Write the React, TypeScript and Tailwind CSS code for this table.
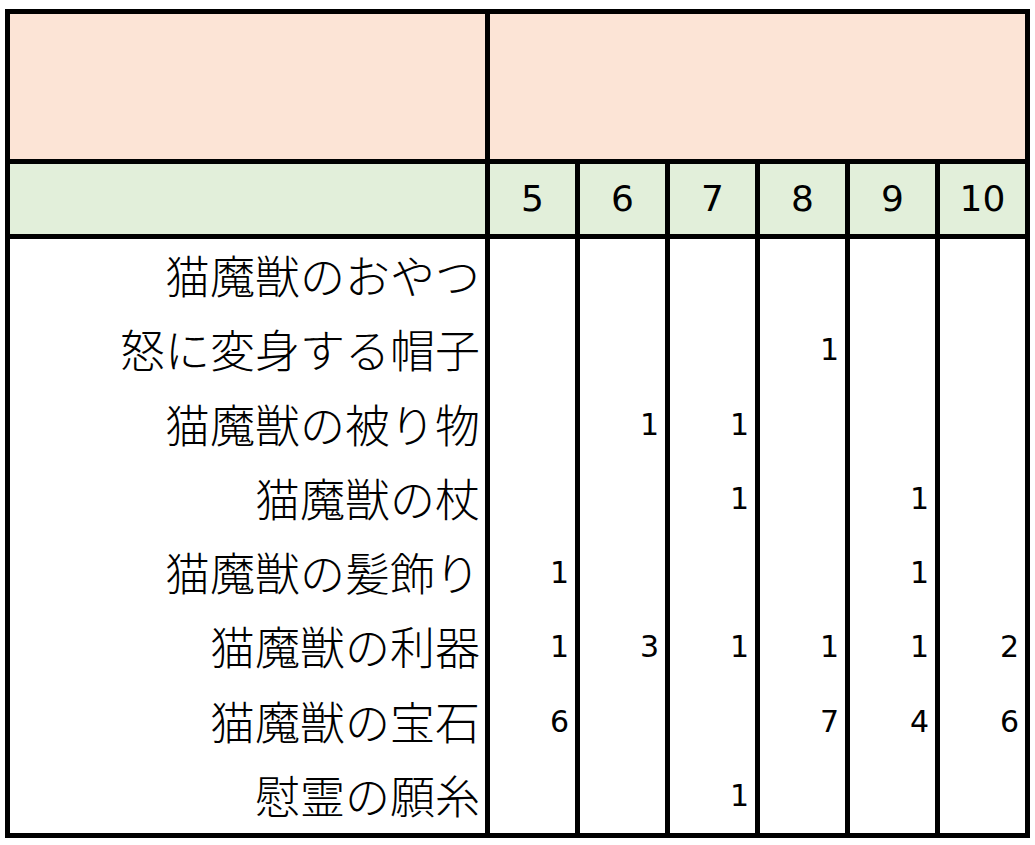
const labels = [
  "猫魔獣のおやつ",
  "怒に変身する帽子",
  "猫魔獣の被り物",
  "猫魔獣の杖",
  "猫魔獣の髪飾り",
  "猫魔獣の利器",
  "猫魔獣の宝石",
  "慰霊の願糸",
]

const headers = [5, 6, 7, 8, 9, 10]

// counts[col][row]
const counts: (number | null)[][] = [
  [null, null, null, null, 1, 1, 6, null],
  [null, null, 1, null, null, 3, null, null],
  [null, null, 1, 1, null, 1, null, 1],
  [null, 1, null, null, null, 1, 7, null],
  [null, null, null, 1, 1, 1, 4, null],
  [null, null, null, null, null, 2, 6, null],
]

const jp = "font-['Noto_Sans_CJK_JP','Noto_Sans',sans-serif]"
const num = "font-['DejaVu_Sans','Noto_Sans',sans-serif]"

export default function App() {
  return (
    <div className="min-h-[845px] bg-white pl-[5px] pt-[9px]">
      <div className="grid w-[1025px] grid-cols-[475px_repeat(6,85px)] grid-rows-[145px_70px_594px] gap-[5px] bg-black p-[5px]">
        <div className="bg-[#fce4d6]" />
        <div className="col-span-6 bg-[#fce4d6]" />

        <div className="bg-[#e2efda]" />
        {headers.map((h) => (
          <div
            key={h}
            className={`flex items-center justify-center bg-[#e2efda] text-[36px] text-black ${num}`}
          >
            {h}
          </div>
        ))}

        <div className={`grid grid-rows-8 bg-white text-[45px] font-light leading-none text-black ${jp}`}>
          {labels.map((l) => (
            <div key={l} className="flex items-center justify-end pb-[3px] pr-[5px]">
              {l}
            </div>
          ))}
        </div>
        {counts.map((col, i) => (
          <div key={i} className={`grid grid-rows-8 bg-white text-[30px] leading-none text-black ${num}`}>
            {col.map((v, j) => (
              <div key={j} className="flex items-center justify-end pr-[6px]">
                {v ?? ""}
              </div>
            ))}
          </div>
        ))}
      </div>
    </div>
  )
}
